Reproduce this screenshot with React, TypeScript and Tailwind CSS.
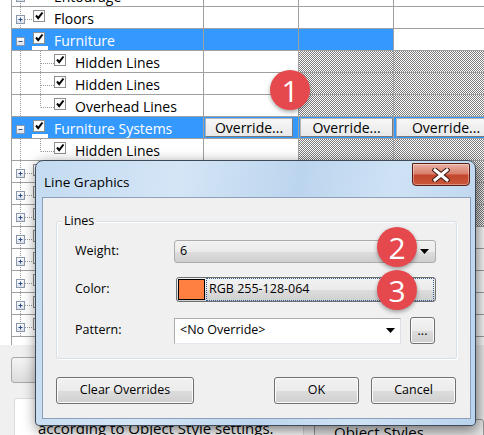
import React from "react";

type CellType = "w" | "h" | "b" | "o2" | "o3" | "o4";

const hatchCls =
  "[background-image:repeating-conic-gradient(#7c7c7c_0%_25%,#ffffff_0%_50%)] [background-size:2px_2px]";

function Checkbox({ x, y }: { x: number; y: number }) {
  return (
    <g>
      <rect x={x + 0.5} y={y + 0.5} width={11} height={11} fill="#ffffff" stroke="#8e8f8f" />
      <path d={`M${x + 3} ${y + 5.5} L${x + 5.2} ${y + 8.2} L${x + 9.5} ${y + 2.5}`} stroke="#000" strokeWidth={2} fill="none" />
    </g>
  );
}

function ExpandBox({ x, y, plus }: { x: number; y: number; plus: boolean }) {
  return (
    <g>
      <defs>
        <linearGradient id="bxg" x1="0" y1="0" x2="0" y2="1">
          <stop offset="0" stopColor="#ffffff" />
          <stop offset="1" stopColor="#d9dee6" />
        </linearGradient>
      </defs>
      <rect x={x + 0.5} y={y + 0.5} width={8} height={8} fill="url(#bxg)" stroke="#8a98ad" />
      <line x1={x + 2.5} y1={y + 4.5} x2={x + 6.5} y2={y + 4.5} stroke="#2a4a8a" />
      {plus && <line x1={x + 4.5} y1={y + 2.5} x2={x + 4.5} y2={y + 6.5} stroke="#2a4a8a" />}
    </g>
  );
}

function Tree({
  level,
  box,
  sel,
  firstChild,
  lastChild,
}: {
  level: 1 | 2;
  box?: "plus" | "minus";
  sel?: boolean;
  firstChild?: boolean;
  lastChild?: boolean;
}) {
  const w = level === 1 ? 40 : 62;
  const dot = "#9a9a9a";
  return (
    <svg width={w} height={21} className="shrink-0 block">
      {!sel && <line x1={8.5} y1={0} x2={8.5} y2={21} stroke={dot} strokeDasharray="1 1" />}
      {level === 1 && (
        <>
          {!sel && <line x1={13} y1={12.5} x2={21} y2={12.5} stroke={dot} strokeDasharray="1 1" />}
          {box && <ExpandBox x={4} y={8} plus={box === "plus"} />}
          <Checkbox x={21} y={3} />
          {sel && <rect x={20} y={17} width={16} height={4} fill="#ffffff" />}
        </>
      )}
      {level === 2 && (
        <>
          <line x1={28.5} y1={0} x2={28.5} y2={lastChild ? 12.5 : firstChild ? 21 : 21} stroke={dot} strokeDasharray="1 1" />
          <line x1={29} y1={12.5} x2={42} y2={12.5} stroke={dot} strokeDasharray="1 1" />
          <Checkbox x={42} y={3} />
        </>
      )}
    </svg>
  );
}

function OverrideBtn({ w, ml }: { w: string; ml: string }) {
  return (
    <div
      className={`${w} ${ml} h-[19px] shrink-0 flex items-center justify-center bg-[linear-gradient(#f7f7f7,#e8e8e8)] border border-[#b4b4b4] border-b-[#7a7a7a] border-r-[#7a7a7a] text-black text-[14px] leading-none`}
    >
      Override...
    </div>
  );
}

function Cell({ type, w, last }: { type: CellType; w: string; last?: boolean }) {
  const base = `${w} h-full flex items-center ${last ? "" : "border-r border-[#a0a0a0]"}`;
  if (type === "h") return <div className={`${base} ${hatchCls}`} />;
  if (type === "b") return <div className={`${base} bg-[#3399ff]`} />;
  if (type === "o2")
    return (
      <div className={`${base} bg-[#3399ff]`}>
        <OverrideBtn w="w-[88px]" ml="ml-[1px]" />
      </div>
    );
  if (type === "o3")
    return (
      <div className={`${base} bg-[#3399ff]`}>
        <OverrideBtn w="w-[93px]" ml="ml-[1px]" />
      </div>
    );
  if (type === "o4")
    return (
      <div className={`${base} bg-[#3399ff] overflow-hidden`}>
        <OverrideBtn w="w-[100px]" ml="ml-[2px]" />
      </div>
    );
  return <div className={`${base} bg-white`} />;
}

type RowDef = {
  level: 1 | 2;
  label: string;
  box?: "plus" | "minus";
  sel?: boolean;
  firstChild?: boolean;
  lastChild?: boolean;
  cells: [CellType, CellType, CellType];
};

function TreeRow(r: RowDef) {
  return (
    <div className="flex h-[22px] border-b border-[#a0a0a0]">
      <div
        className={`w-[192px] shrink-0 border-r border-[#a0a0a0] flex items-center overflow-hidden ${
          r.sel ? "bg-[#3399ff] text-white" : "bg-white text-black"
        }`}
      >
        <Tree level={r.level} box={r.box} sel={r.sel} firstChild={r.firstChild} lastChild={r.lastChild} />
        {r.label !== "" && (
          <span className={`${r.level === 1 ? "ml-[2px]" : "ml-[1px]"} text-[14px] leading-none pt-[2px] whitespace-nowrap`}>
            {r.label}
          </span>
        )}
      </div>
      <Cell type={r.cells[0]} w="w-[95px] shrink-0" />
      <Cell type={r.cells[1]} w="w-[95px] shrink-0" />
      <Cell type={r.cells[2]} w="flex-1" last />
    </div>
  );
}

const rows: RowDef[] = [
  { level: 1, label: "Entourage", box: "plus", cells: ["w", "w", "w"] },
  { level: 1, label: "Floors", box: "plus", cells: ["w", "w", "w"] },
  { level: 1, label: "Furniture", box: "minus", sel: true, cells: ["b", "b", "w"] },
  { level: 2, label: "Hidden Lines", firstChild: true, cells: ["w", "h", "h"] },
  { level: 2, label: "Hidden Lines", cells: ["w", "h", "h"] },
  { level: 2, label: "Overhead Lines", lastChild: true, cells: ["w", "h", "h"] },
  { level: 1, label: "Furniture Systems", box: "minus", sel: true, cells: ["o2", "o3", "o4"] },
  { level: 2, label: "Hidden Lines", lastChild: true, cells: ["w", "h", "h"] },
  { level: 1, label: "", box: "plus", cells: ["w", "h", "h"] },
  { level: 1, label: "", box: "plus", cells: ["w", "h", "h"] },
  { level: 1, label: "", box: "plus", cells: ["w", "h", "h"] },
  { level: 1, label: "", box: "plus", cells: ["w", "w", "w"] },
  { level: 1, label: "", box: "plus", cells: ["w", "w", "w"] },
  { level: 1, label: "", box: "plus", cells: ["w", "w", "w"] },
  { level: 1, label: "", box: "plus", cells: ["w", "w", "w"] },
  { level: 1, label: "", box: "plus", cells: ["w", "w", "w"] },
];

function Win7Button({ children, className }: { children: React.ReactNode; className: string }) {
  return (
    <div
      className={`${className} flex items-center justify-center rounded-[3px] border border-[#707070] bg-[linear-gradient(#f2f2f2_0%,#ebebeb_50%,#dddddd_51%,#cfcfcf_100%)] shadow-[inset_0_0_0_1px_#fbfbfb] text-[12.5px] text-black leading-none`}
    >
      {children}
    </div>
  );
}

function Arrow() {
  return (
    <svg width="9" height="5" className="block">
      <path d="M0 0 H9 L4.5 5 Z" fill="#000" />
    </svg>
  );
}

function Badge({ n, className }: { n: string; className: string }) {
  return (
    <div
      className={`${className} absolute w-[40px] h-[40px] rounded-full bg-[#e5494e] text-white flex items-center justify-center text-[30px] leading-none shadow-[0_2px_4px_rgba(0,0,0,0.35)]`}
    >
      <span className="pt-[1px]">{n}</span>
    </div>
  );
}

export default function App() {
  return (
    <div className="relative w-[484px] h-[435px] overflow-hidden bg-[#f0f0f0] font-['Open_Sans',sans-serif]">
      {/* background table */}
      <div className="bg-white w-[484px]">
        <div className="ml-[11px] mt-[-15px] border-l border-[#a0a0a0] h-[360px] overflow-hidden">
          {rows.map((r, i) => (
            <TreeRow key={i} {...r} />
          ))}
        </div>
      </div>

      {/* area below table */}
      <div className="flex flex-col">
        <div className="ml-[11px] mt-[12px] w-[120px] h-[26px] rounded-[3px] border border-[#a8a8a8] bg-[linear-gradient(#f4f4f4,#dcdcdc)]" />
        <div className="flex items-start mt-[15px]">
          <div className="ml-[14px] w-[290px] h-[60px] bg-white border border-[#dcdcdc] rounded-[3px] pl-[23px] pt-[20px] text-[15px] leading-[18px] text-black whitespace-nowrap">
            according to Object Style settings.
          </div>
          <div className="ml-[10px] mt-[21px] w-[170px] h-[30px] border border-[#9a9a9a] rounded-[3px] bg-[linear-gradient(#f2f2f2,#dddddd)] pl-[19px] pt-[3px] text-[15px] leading-[18px] text-black">
            <span className="underline">O</span>bject Styles...
          </div>
        </div>
      </div>

      {/* dialog */}
      <div className="absolute left-[35px] top-[160px] w-[441px] h-[266px] rounded-t-[8px] rounded-b-[4px] border border-[#3e4a58] bg-[linear-gradient(100deg,#c4dbf1_0%,#d4e5f6_30%,#bcd5ee_55%,#cfe2f5_75%,#b9d3ed_100%)] shadow-[2px_4px_14px_rgba(0,0,0,0.55)] flex flex-col">
        <div className="h-[36px] flex items-start justify-between">
          <div className="ml-[8px] mt-[11px] text-[13.5px] leading-[20px] text-black">Line Graphics</div>
          <div className="mr-[5px] mt-[2px] w-[58px] h-[23px] rounded-b-[4px] rounded-tr-[2px] border border-[#5b1e14] bg-[linear-gradient(#eab1a4_0%,#d9806d_45%,#c4452c_55%,#c9583c_100%)] shadow-[inset_0_0_0_1px_rgba(255,255,255,0.35)] flex items-center justify-center">
            <svg width="18" height="14">
              <path d="M3 2 L15 12 M15 2 L3 12" stroke="#3a1a14" strokeWidth="5" strokeLinecap="square" />
              <path d="M3 2 L15 12 M15 2 L3 12" stroke="#ffffff" strokeWidth="3" strokeLinecap="square" />
            </svg>
          </div>
        </div>
        <div className="ml-[6px] mr-[4px] h-[222px] border border-[#8ca1b9] bg-[#f0f0f0] flex flex-col text-[12.5px] text-black">
          {/* group box */}
          <div className="relative ml-[13px] mt-[23px] w-[401px] h-[138px] border border-[#d5dfe5] rounded-[3px] shadow-[inset_1px_1px_0_#ffffff,1px_1px_0_#ffffff] flex flex-col pt-[18px]">
            <span className="absolute left-[5px] top-[-11px] px-[2px] bg-[#f0f0f0] leading-[20px]">Lines</span>
            <div className="flex items-center h-[23px]">
              <div className="w-[117px] pl-[18px]">Weight:</div>
              <div className="w-[262px] h-[23px] rounded-[3px] border border-[#acacac] bg-[linear-gradient(#f2f2f2_0%,#ebebeb_50%,#dddddd_51%,#cfcfcf_100%)] flex items-center justify-between pl-[5px] pr-[6px]">
                <span>6</span>
                <Arrow />
              </div>
            </div>
            <div className="flex items-center h-[25px] mt-[14px]">
              <div className="w-[119px] pl-[18px]">Color:</div>
              <div className="w-[260px] h-[25px] rounded-[3px] border border-[#707070] bg-[linear-gradient(#f2f2f2_0%,#ebebeb_50%,#dddddd_51%,#cfcfcf_100%)] flex items-center p-[1px]">
                <div className="w-[27px] h-[21px] bg-[#ff8040] border border-black shrink-0" />
                <div className="ml-[1px] flex-1 h-[23px] border border-dotted border-[#2f5f9a] flex items-center pl-[2px]">RGB 255-128-064</div>
              </div>
            </div>
            <div className="flex items-center h-[27px] mt-[15px]">
              <div className="w-[117px] pl-[18px]">Pattern:</div>
              <div className="w-[227px] h-[26px] border border-[#abadb3] border-b-[#e3e9ef] border-r-[#dbdfe6] bg-white flex items-center justify-between pl-[5px] pr-[5px]">
                <span>&lt;No Override&gt;</span>
                <Arrow />
              </div>
              <Win7Button className="ml-[9px] w-[25px] h-[27px] items-end pb-[6px]">...</Win7Button>
            </div>
          </div>
          {/* buttons */}
          <div className="flex mt-[18px] ml-[13px] h-[27px]">
            <Win7Button className="w-[138px] h-[27px]">Clear Overrides</Win7Button>
            <Win7Button className="ml-[80px] w-[85px] h-[27px]">OK</Win7Button>
            <Win7Button className="ml-[12px] w-[85px] h-[27px]">Cancel</Win7Button>
          </div>
        </div>
      </div>

      <Badge n="1" className="left-[270px] top-[70px]" />
      <Badge n="2" className="left-[377px] top-[227px]" />
      <Badge n="3" className="left-[377px] top-[270px]" />
    </div>
  );
}
